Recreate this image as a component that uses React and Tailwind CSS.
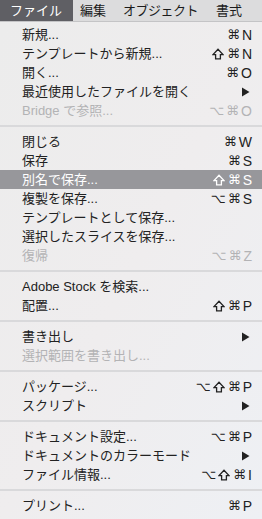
import React from "react";

const FONT = { fontFamily: '"Liberation Sans", "Noto Sans CJK JP", sans-serif' };
const SYM = { fontFamily: '"DejaVu Sans", sans-serif' };

const items = [
  { t: "新規...", k: "⌘N" },
  { t: "テンプレートから新規...", k: "⇧⌘N" },
  { t: "開く...", k: "⌘O" },
  { t: "最近使用したファイルを開く", sub: true },
  { t: "Bridge で参照...", k: "⌥⌘O", dis: true },
  { sep: true },
  { t: "閉じる", k: "⌘W" },
  { t: "保存", k: "⌘S" },
  { t: "別名で保存...", k: "⇧⌘S", hi: true },
  { t: "複製を保存...", k: "⌥⌘S" },
  { t: "テンプレートとして保存..." },
  { t: "選択したスライスを保存..." },
  { t: "復帰", k: "⌥⌘Z", dis: true },
  { sep: true },
  { t: "Adobe Stock を検索..." },
  { t: "配置...", k: "⇧⌘P" },
  { sep: true },
  { t: "書き出し", sub: true },
  { t: "選択範囲を書き出し...", dis: true },
  { sep: true },
  { t: "パッケージ...", k: "⌥⇧⌘P" },
  { t: "スクリプト", sub: true },
  { sep: true },
  { t: "ドキュメント設定...", k: "⌥⌘P" },
  { t: "ドキュメントのカラーモード", sub: true },
  { t: "ファイル情報...", k: "⌥⇧⌘I" },
  { sep: true },
  { t: "プリント...", k: "⌘P" },
];

function Arrow() {
  return (
    <svg width="9" height="10" viewBox="0 0 9 10" className="mr-[2px]">
      <path d="M1 0.5 L8.5 5 L1 9.5 Z" fill="#222" />
    </svg>
  );
}

function ShiftIcon() {
  return (
    <svg width="12" height="12" viewBox="0 0 12 12" className="mr-[3px]">
      <path
        d="M6 1.2 L11 6.6 H8.4 V10.8 H3.6 V6.6 H1 Z"
        fill="none"
        stroke="currentColor"
        strokeWidth="1.3"
        strokeLinejoin="miter"
      />
    </svg>
  );
}

function Shortcut({ k }) {
  const chars = Array.from(k);
  const key = chars.pop();
  return (
    <span className="flex items-center text-[14px]">
      {chars.map((c, i) =>
        c === "⇧" ? (
          <ShiftIcon key={i} />
        ) : (
          <span key={i} className="text-[13px] mr-[2px]" style={SYM}>
            {c}
          </span>
        )
      )}
      <span>{key}</span>
    </span>
  );
}

export default function App() {
  return (
    <div className="w-[262px] h-[519px] overflow-hidden bg-[#e9e9ea] relative" style={FONT}>
      <div className="h-[22px] flex items-stretch bg-[#dcdcdd] border-b border-[#c4c4c6] text-[13px] text-[#1b1b1b]">
        <div className="w-[73px] flex items-center pl-[10px] bg-[#5f5f64] text-white">ファイル</div>
        <div className="flex items-center pl-[7px]">編集</div>
        <div className="flex items-center pl-[17px] tracking-[-0.5px]">オブジェクト</div>
        <div className="flex items-center pl-[18px]">書式</div>
      </div>
      <div className="pt-[3px] pb-[4px] bg-gradient-to-br from-[#ececec] via-[#efedee] to-[#eef0f4] text-[13px] leading-none">
        {items.map((it, i) =>
          it.sep ? (
            <div key={i} className="h-[12px] flex items-center">
              <div className="w-full h-[2px] bg-[#d9d9db]" />
            </div>
          ) : (
            <div
              key={i}
              className={
                "h-[19px] flex items-center justify-between pl-[22px] pr-[10px] " +
                (it.hi ? "bg-[#97979b] text-white" : it.dis ? "text-[#b3b3b5]" : "text-[#222222]")
              }
            >
              <span>{it.t}</span>
              {it.k ? <Shortcut k={it.k} /> : it.sub ? <Arrow /> : null}
            </div>
          )
        )}
      </div>
    </div>
  );
}
